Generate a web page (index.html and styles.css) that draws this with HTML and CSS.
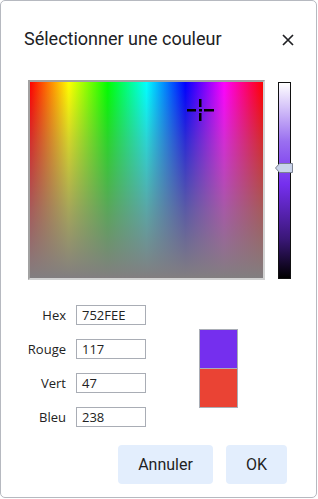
FILE: index.html
```html
<!DOCTYPE html>
<html lang="fr">
<head>
<meta charset="utf-8">
<link rel="stylesheet" href="styles.css">
</head>
<body>
<div class="dialog">
  <div class="header">
    <div class="title">Sélectionner une couleur</div>
    <button class="close" aria-label="Fermer">
      <svg width="12" height="12" viewBox="0 0 12 12"><path d="M1 1L11 11M11 1L1 11" stroke="#202124" stroke-width="1.7" fill="none"/></svg>
    </button>
  </div>
  <div class="picker">
    <div class="field">
      <div class="hues"></div>
      <div class="fade"></div>
      <svg class="cross" width="28" height="24" viewBox="0 0 28 24">
        <rect x="0" y="10" width="9" height="2.5" fill="#000"/>
        <rect x="17" y="10" width="10" height="2.5" fill="#000"/>
        <rect x="12" y="10" width="3" height="2.5" fill="#000"/>
        <rect x="12" y="0" width="2.5" height="8" fill="#000"/>
        <rect x="12" y="14" width="2.5" height="8" fill="#000"/>
      </svg>
    </div>
    <div class="slider">
      <svg class="handle" width="18" height="10" viewBox="0 0 18 10"><path d="M0.5 5L4.5 0.5H17.5V9.5H4.5Z" fill="#c9d3ea" stroke="#7c8292" stroke-width="1"/></svg>
    </div>
  </div>
  <div class="main">
    <div class="form">
      <label class="lbl">Hex</label><div class="inp">752FEE</div>
      <label class="lbl">Rouge</label><div class="inp">117</div>
      <label class="lbl">Vert</label><div class="inp">47</div>
      <label class="lbl">Bleu</label><div class="inp">238</div>
    </div>
    <div class="swatch">
      <div class="sw new"></div>
      <div class="sw old"></div>
    </div>
  </div>
  <div class="actions">
    <button class="btn cancel">Annuler</button>
    <button class="btn ok">OK</button>
  </div>
</div>
</body>
</html>
```
FILE: styles.css
```css
* { box-sizing: border-box; }
html, body { margin: 0; padding: 0; background: #fff; }
body { font-family: Roboto, "Noto Sans", sans-serif; color: #202124; }
.dialog {
  width: 317px;
  height: 498px;
  border: 1px solid #b6b9c0;
  border-radius: 5px;
  background: #fff;
  display: flex;
  flex-direction: column;
}
.header {
  display: flex;
  justify-content: space-between;
  padding: 24px 21px 0 23px;
  height: 79px;
  align-items: flex-start;
}
.title {
  font-size: 18px;
  line-height: 28px;
}
.close {
  border: 0;
  background: none;
  padding: 0;
  width: 14px;
  height: 14px;
  margin-top: 8px;
  display: flex;
  align-items: center;
  justify-content: center;
}
.picker {
  display: flex;
  padding-left: 27px;
  gap: 13px;
  height: 200px;
}
.field {
  position: relative;
  width: 237px;
  height: 200px;
  border: 2px solid;
  border-color: #a2a2a2 #d2d2d2 #d2d2d2 #a2a2a2;
  overflow: hidden;
}
.hues, .fade { position: absolute; inset: 0; }
.hues {
  background: linear-gradient(to right, #ff0000 0%, #ffff00 16.67%, #00ff00 33.33%, #00ffff 50%, #0000ff 66.67%, #ff00ff 83.33%, #ff0000 100%);
}
.fade {
  background: linear-gradient(to bottom, rgba(128,128,128,0) 0%, rgba(128,128,128,0.35) 30%, rgba(128,128,128,0.7) 65%, rgba(130,126,128,1) 100%);
}
.cross { position: absolute; left: 157px; top: 17px; }
.slider {
  position: relative;
  margin-top: 2px;
  width: 13px;
  height: 197px;
  border: 1px solid #111;
  background: linear-gradient(to bottom, #ffffff 0%, #9a6ff0 30%, #752fee 52%, #3a1777 80%, #000000 100%);
}
.handle { position: absolute; left: -4px; top: 80px; }
.main {
  display: flex;
  align-items: center;
  padding-left: 15px;
  margin-top: 25px;
  height: 122px;
}
.form {
  display: grid;
  grid-template-columns: 50px 70px;
  column-gap: 10px;
  row-gap: 14px;
  font-family: "Open Sans", "Noto Sans", sans-serif;
  font-size: 13px;
  color: #222;
}
.lbl { text-align: right; line-height: 20px; }
.inp {
  height: 20px;
  border: 1px solid #a9adb5;
  padding: 0 5px;
  line-height: 18px;
}
.swatch {
  margin-left: 53px;
  margin-top: 4px;
  width: 39px;
  border: 1px solid #a9adb5;
  display: flex;
  flex-direction: column;
}
.sw { height: 38px; }
.new { background: #752fee; border-bottom: 1px solid #a9adb5; height: 39px; }
.old { background: #ea4334; }
.actions {
  display: flex;
  justify-content: flex-end;
  gap: 13px;
  padding-right: 29px;
  margin-top: 18px;
}
.btn {
  border: 0;
  border-radius: 4px;
  background: #e3eefd;
  font-family: Roboto, sans-serif;
  font-size: 16px;
  color: #1f1f1f;
  height: 39px;
  padding: 0;
}
.cancel { width: 95px; }
.ok { width: 61px; }
```
